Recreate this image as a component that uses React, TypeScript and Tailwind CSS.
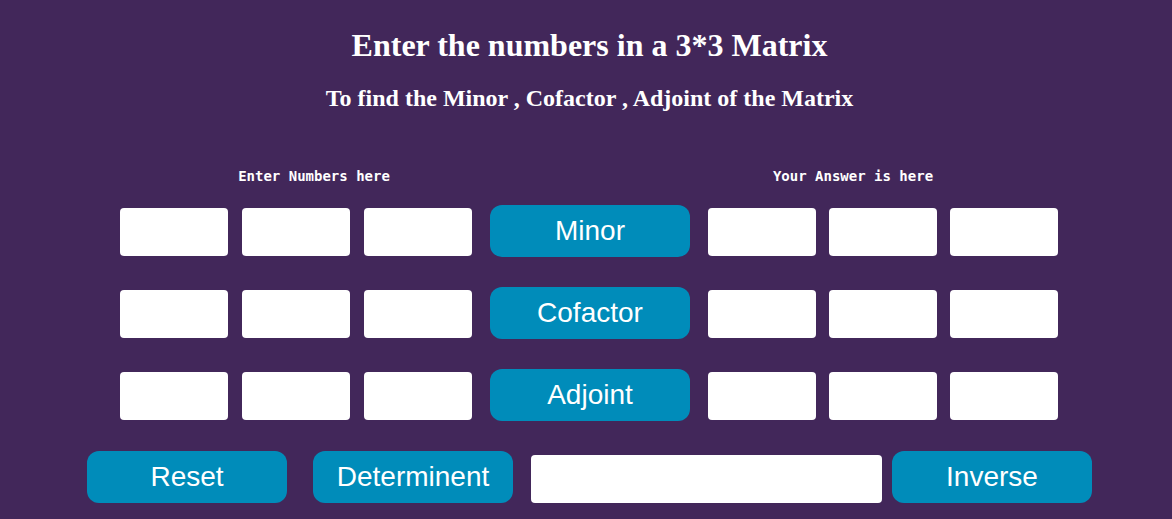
import React from 'react'

const rows = ['Minor', 'Cofactor', 'Adjoint']

function Cell({ wide }: { wide?: boolean }) {
  return (
    <input
      type="text"
      className={
        'h-[48px] rounded-[4px] border-0 bg-white outline-none ' + (wide ? 'w-[351px]' : 'w-[108px]')
      }
    />
  )
}

function Btn({ label, className }: { label: string; className?: string }) {
  return (
    <button
      className={
        'h-[52px] w-[200px] rounded-[12px] bg-[#008cba] text-[28px] leading-[32px] text-white ' +
        (className ?? '')
      }
      style={{ fontFamily: '"Liberation Sans", Arial, sans-serif' }}
    >
      {label}
    </button>
  )
}

export default function App() {
  return (
    <div className="min-h-[519px] w-full bg-[#42275a] pb-[16px]">
      <h1
        className="pt-[27px] pl-[7px] text-center text-[32px] leading-[37px] font-bold text-white"
        style={{ fontFamily: '"Liberation Serif", "Times New Roman", serif' }}
      >
        Enter the numbers in a 3*3 Matrix
      </h1>
      <h2
        className="mt-[20px] pl-[7px] text-center text-[24px] leading-[28px] font-bold text-white"
        style={{ fontFamily: '"Liberation Serif", "Times New Roman", serif' }}
      >
        To find the Minor , Cofactor , Adjoint of the Matrix
      </h2>

      <div
        className="mt-[56px] flex pl-[120px] text-[14px] leading-[17px] font-bold text-white"
        style={{ fontFamily: '"DejaVu Sans Mono", monospace' }}
      >
        <div className="w-[388px] text-center">Enter Numbers here</div>
        <div className="ml-[145px] w-[400px] text-center">Your Answer is here</div>
      </div>

      <div className="mt-[20px] flex flex-col gap-[30px]">
        {rows.map(r => (
          <div key={r} className="flex items-center pl-[120px]">
            <div className="mt-[1px] flex gap-[14px]">
              <Cell />
              <Cell />
              <Cell />
            </div>
            <Btn label={r} className="ml-[18px]" />
            <div className="mt-[1px] ml-[18px] flex gap-[13px]">
              <Cell />
              <Cell />
              <Cell />
            </div>
          </div>
        ))}
      </div>

      <div className="mt-[30px] flex items-end pl-[87px]">
        <Btn label="Reset" />
        <Btn label="Determinent" className="ml-[26px]" />
        <div className="ml-[18px] flex">
          <Cell wide />
        </div>
        <Btn label="Inverse" className="ml-[10px]" />
      </div>
    </div>
  )
}
